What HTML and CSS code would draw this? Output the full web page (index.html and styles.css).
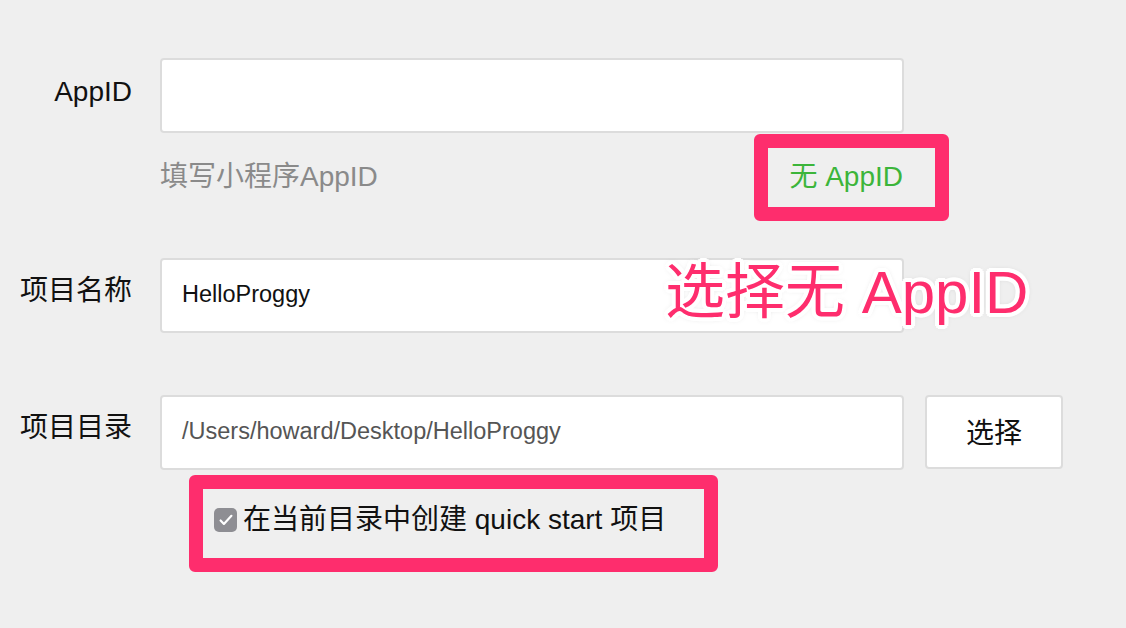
FILE: index.html
```html
<!DOCTYPE html>
<html lang="zh-CN">
<head>
<meta charset="utf-8">
<title>新建项目</title>
<link rel="stylesheet" href="styles.css">
</head>
<body>
<div class="page">
  <form class="form">
    <div class="label label-latin">AppID</div>
    <div class="field">
      <div class="input"></div>
      <div class="hint-row">
        <span class="hint">填写小程序AppID</span>
        <a class="link mark mark-link">无 AppID</a>
      </div>
    </div>
    <div class="side"></div>

    <div class="label">项目名称</div>
    <div class="field field-name">
      <div class="input"><span class="value">HelloProggy</span></div>
    </div>
    <div class="side"></div>

    <div class="label">项目目录</div>
    <div class="field field-dir">
      <div class="input"><span class="value value-muted">/Users/howard/Desktop/HelloProggy</span></div>
      <div class="check-row">
        <label class="check mark mark-check">
          <span class="box"><svg viewBox="0 0 24 24" width="20" height="20"><path d="M5.5 12.5l4 4.2L18.5 7" fill="none" stroke="#fff" stroke-width="2.6" stroke-linecap="round" stroke-linejoin="round"/></svg></span>
          <span class="check-text">在当前目录中创建 quick start 项目</span>
        </label>
      </div>
    </div>
    <div class="side side-btn"><button type="button" class="btn">选择</button></div>
  </form>
  <div class="callout">选择无 AppID</div>
</div>
</body>
</html>
```
FILE: styles.css
```css
html, body {
  margin: 0;
  padding: 0;
  background: #efefef;
}
body {
  font-family: "Liberation Sans", "Noto Sans CJK SC", sans-serif;
  color: #111;
  width: 1126px;
  height: 628px;
  overflow: hidden;
}
.page {
  position: relative;
  height: 628px;
}
.form {
  display: grid;
  grid-template-columns: 132px 28px 744px 21px 138px;
  padding-top: 58px;
}
.label {
  grid-column: 1;
  justify-self: end;
  font-size: 28px;
  line-height: 28px;
  padding-top: 19px;
  white-space: nowrap;
}
.label-latin {
  padding-top: 20px;
}
.field {
  grid-column: 3;
  display: flex;
  flex-direction: column;
}
.side {
  grid-column: 5;
}
.input {
  box-sizing: border-box;
  height: 75px;
  background: #fff;
  border: 2px solid #dcdcdc;
  border-radius: 4px;
  display: flex;
  align-items: center;
  padding-left: 20px;
}
.value {
  font-size: 23.5px;
  color: #111;
  padding-bottom: 2px;
}
.value-muted {
  color: #555;
}
.hint-row {
  display: flex;
  justify-content: space-between;
  align-items: center;
  margin-top: 30px;
  margin-bottom: 67px;
  height: 28px;
  font-size: 28px;
  line-height: 28px;
}
.hint {
  color: #8a8a8a;
}
.link {
  color: #3cb53a;
  text-decoration: none;
  margin-right: 1px;
}
.field-name {
  margin-bottom: 62px;
}
.mark {
  position: relative;
}
.mark::after {
  content: "";
  position: absolute;
  border: 14px solid #fe2d6d;
  border-radius: 6px;
  pointer-events: none;
}
.mark-link::after {
  left: -35px;
  right: -46px;
  top: -29px;
  bottom: -30px;
}
.check-row {
  display: flex;
  padding-left: 54px;
  margin-top: 36px;
}
.check {
  display: flex;
  align-items: center;
  gap: 6px;
  font-size: 28px;
  line-height: 28px;
}
.mark-check::after {
  left: -25px;
  right: -52px;
  top: -31px;
  bottom: -38px;
}
.box {
  width: 23px;
  height: 24px;
  border-radius: 5px;
  background: #8e8e93;
  display: flex;
  align-items: center;
  justify-content: center;
}
.check-text {
  color: #111;
}
.btn {
  box-sizing: border-box;
  width: 138px;
  height: 74px;
  background: #fff;
  border: 2px solid #dcdcdc;
  border-radius: 4px;
  font-family: "Liberation Sans", "Noto Sans CJK SC", sans-serif;
  font-size: 28px;
  color: #111;
  padding: 0 0 3px;
}
.callout {
  position: absolute;
  left: 665px;
  top: 257px;
  font-size: 60px;
  line-height: 72px;
  color: #fe2d6d;
  white-space: nowrap;
  text-shadow:
    0 0 1px #fff,
    3px 0 0 #fff, -3px 0 0 #fff, 0 3px 0 #fff, 0 -3px 0 #fff,
    2px 2px 0 #fff, -2px 2px 0 #fff, 2px -2px 0 #fff, -2px -2px 0 #fff,
    4px 1px 0 #fff, -4px 1px 0 #fff, 1px 4px 0 #fff, 1px -4px 0 #fff,
    4px -1px 0 #fff, -4px -1px 0 #fff, -1px 4px 0 #fff, -1px -4px 0 #fff,
    3px 3px 1px #fff, -3px 3px 1px #fff, 3px -3px 1px #fff, -3px -3px 1px #fff,
    0 0 6px rgba(0,0,0,0.35);
}
```
